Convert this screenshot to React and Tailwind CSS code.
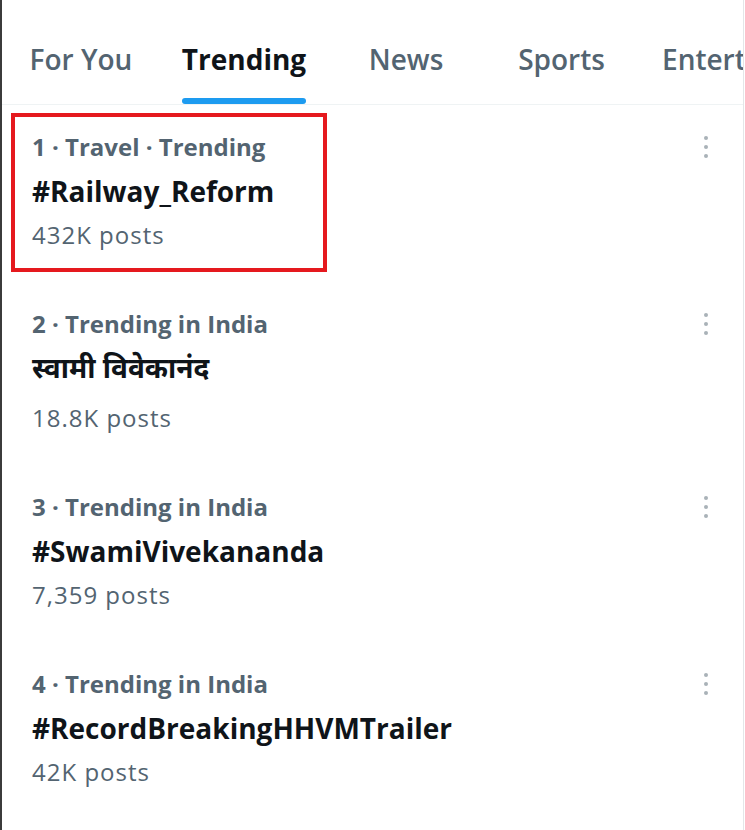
import React from 'react';

const tabs = [
  { label: 'For You', width: 'w-[158px]' },
  { label: 'Trending', width: 'w-[168px]', active: true },
  { label: 'News', width: 'w-[156px]' },
  { label: 'Sports', width: 'w-[155px]' },
  { label: 'Entertainment', width: 'w-[160px]', left: true },
];

const trends = [
  { meta: '1 · Travel · Trending', title: '#Railway_Reform', posts: '432K posts', marked: true },
  { meta: '2 · Trending in India', title: 'स्वामी विवेकानंद', posts: '18.8K posts', hindi: true },
  { meta: '3 · Trending in India', title: '#SwamiVivekananda', posts: '7,359 posts' },
  { meta: '4 · Trending in India', title: '#RecordBreakingHHVMTrailer', posts: '42K posts' },
];

function MoreDots() {
  return (
    <div className="flex h-[44px] w-[24px] flex-col items-center justify-center gap-[4.5px]">
      <span className="h-[4.5px] w-[4.5px] rounded-full bg-[#a9b2b8]" />
      <span className="h-[4.5px] w-[4.5px] rounded-full bg-[#a9b2b8]" />
      <span className="h-[4.5px] w-[4.5px] rounded-full bg-[#a9b2b8]" />
    </div>
  );
}

export default function App() {
  return (
    <div className="h-[830px] w-[745px] overflow-hidden bg-white font-['Open_Sans',sans-serif]">
      <div className="h-full w-[744px] border-l-2 border-r border-l-[#3b3b3b] border-r-[#e4e6e8]">
        <nav className="flex h-[105px] overflow-hidden border-b border-[#eff3f4]">
          {tabs.map((tab) => (
            <div
              key={tab.label}
              className={`flex shrink-0 flex-col ${tab.left ? 'items-start pl-[23px]' : 'items-center'} ${tab.width}`}
            >
              <div className="flex flex-1 flex-col items-stretch">
                <span
                  className={`pt-[40px] text-[28px] leading-[38px] whitespace-nowrap ${
                    tab.active ? 'font-bold text-[#0f1419]' : 'font-semibold text-[#536471]'
                  }`}
                >
                  {tab.label}
                </span>
                <div className="flex-1" />
                {tab.active && <div className="h-[6px] rounded-full bg-[#1d9bf0]" />}
              </div>
            </div>
          ))}
        </nav>

        <div className="flex flex-col">
          {trends.map((t) => (
            <div key={t.meta} className="relative flex justify-between pl-[30px] pr-[25px] pt-[20px] pb-[25px]">
              <div className="flex flex-col">
                <span className="text-[24px] leading-[44px] font-bold text-[#536471]">{t.meta}</span>
                <span
                  className={`font-bold text-[#0f1419] ${
                    t.hindi
                      ? "text-[28px] leading-[50px] font-['Noto_Sans_Devanagari','Lohit_Devanagari','Noto_Sans',sans-serif]"
                      : 'text-[28px] leading-[44px]'
                  }`}
                >
                  {t.title}
                </span>
                <span className="text-[24px] leading-[44px] tracking-[1px] text-[#536471]">{t.posts}</span>
              </div>
              <MoreDots />
              {t.marked && (
                <div className="pointer-events-none absolute left-[9px] top-[8px] h-[159px] w-[316px] border-[4.5px] border-[#e5191e]" />
              )}
            </div>
          ))}
        </div>
      </div>
    </div>
  );
}
